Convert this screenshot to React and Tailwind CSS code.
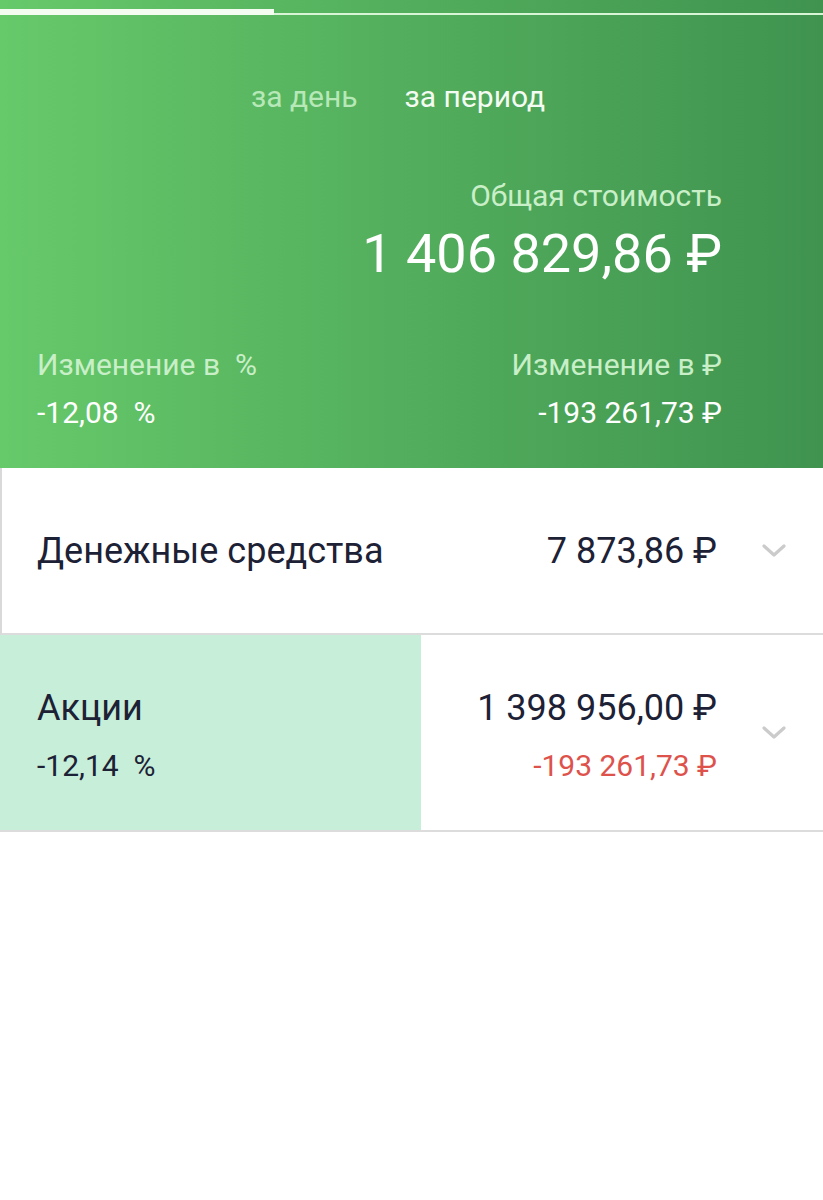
export default function App() {
  return (
    <div className="min-h-[1200px] bg-white font-['Roboto',sans-serif]">
      {/* header */}
      <div className="bg-gradient-to-r from-[#66c96a] to-[#3f934f] pt-[9px] pb-[37px]">
        <div className="relative h-[6px]">
          <div className="absolute left-0 right-0 bottom-0 h-[2px] bg-[#d8f5d6]" />
          <div className="absolute left-0 top-0 h-[6px] w-[274px] bg-[#f4fbf0]" />
        </div>

        <div className="flex gap-[47px] pl-[251px] pt-[64px] text-[30px] leading-[36px]">
          <span className="text-[#b7e8b8]">за день</span>
          <span className="text-[#f4fbf2]">за период</span>
        </div>

        <div className="flex flex-col items-end pr-[101px] pt-[63px]">
          <div className="text-[30px] leading-[36px] text-[#c9efc8]">Общая стоимость</div>
          <div className="text-[54px] leading-[60px] text-white mt-[10px]">1 406 829,86 ₽</div>
        </div>

        <div className="flex justify-between pl-[37px] pr-[101px] pt-[63px] text-[30px] leading-[36px]">
          <div className="flex flex-col gap-[12px]">
            <span className="text-[#c9efc8]">Изменение в &nbsp;%</span>
            <span className="text-white">-12,08 &nbsp;%</span>
          </div>
          <div className="flex flex-col items-end gap-[12px]">
            <span className="text-[#c9efc8]">Изменение в ₽</span>
            <span className="text-white">-193 261,73 ₽</span>
          </div>
        </div>
      </div>

      {/* cash row */}
      <div className="flex items-center h-[167px] border-l-2 border-[#d9d9d9] border-b-2 border-b-[#dcdcdc] pl-[35px] pr-[36px]">
        <span className="flex-1 text-[36px] text-[#1d2135]">Денежные средства</span>
        <span className="text-[36px] text-[#1d2135]">7 873,86 ₽</span>
        <Chevron className="ml-[44px]" />
      </div>

      {/* shares row */}
      <div className="flex h-[197px] border-b-2 border-[#dcdcdc]">
        <div className="w-[421px] bg-[#c6eed9] flex flex-col pt-[53px] pl-[37px] gap-[20px]">
          <span className="text-[36px] leading-[40px] text-[#1d2135]">Акции</span>
          <span className="text-[30px] leading-[36px] text-[#1d2135]">-12,14 &nbsp;%</span>
        </div>
        <div className="flex-1 flex items-center pr-[36px]">
          <div className="flex-1 flex flex-col items-end pt-[53px] self-stretch gap-[20px]">
            <span className="text-[36px] leading-[40px] text-[#1d2135]">1 398 956,00 ₽</span>
            <span className="text-[30px] leading-[36px] text-[#de524c]">-193 261,73 ₽</span>
          </div>
          <Chevron className="ml-[44px]" />
        </div>
      </div>
    </div>
  );
}

function Chevron({ className = "" }) {
  return (
    <svg className={className} width="26" height="16" viewBox="0 0 26 16" fill="none">
      <path d="M3 3 L13 12 L23 3" stroke="#cbcbcb" strokeWidth="3.2" strokeLinecap="round" strokeLinejoin="round" />
    </svg>
  );
}
